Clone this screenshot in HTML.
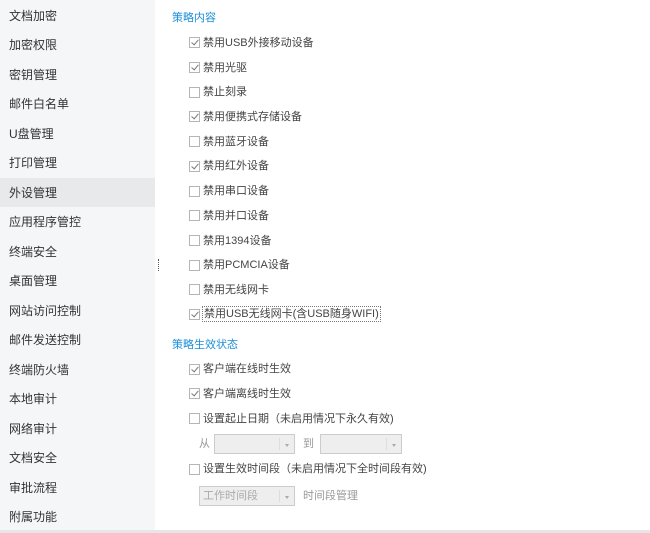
<!DOCTYPE html>
<html><head><meta charset="utf-8"><style>
*{margin:0;padding:0;box-sizing:border-box}
body{width:650px;height:533px;background:#fff;font-family:"Liberation Sans","Noto Sans CJK SC",sans-serif;position:relative;overflow:hidden;color:#444}
.side{position:absolute;left:0;top:0;width:155px;height:533px;background:#f5f6f8}
.si{position:absolute;left:9px;font-size:12px;color:#333;line-height:16px}
.act{position:absolute;left:0;top:178px;width:155px;height:29px;background:#e8e9eb}
.t{position:absolute;font-size:11px;line-height:14px;white-space:nowrap;color:#444}
.h{position:absolute;left:172px;font-size:11px;color:#1a8fd8;line-height:14px}
.cb{position:absolute;left:189px;width:11px;height:11px;border:1px solid #b5b5b5;background:#fff}
.cb.c::after{content:"";position:absolute;left:3px;top:0px;width:3px;height:6px;border:solid #777;border-width:0 1px 1px 0;transform:rotate(40deg)}
.sel{position:absolute;height:20px;border:1px solid #ccc;background:#eee}
.sel::after{content:"";position:absolute;right:0;top:3px;width:14px;height:12px;border-left:1px solid #ddd}
.sel::before{content:"";position:absolute;right:5px;top:9px;border:2px solid transparent;border-top:3px solid #aaa}
.g{color:#999}
</style></head><body>
<div class="side"><div class="act"></div></div>
<div style="position:absolute;left:158px;top:259px;width:1px;height:12px;border-left:1px dotted #555"></div>
<div style="position:absolute;left:0;top:530px;width:650px;height:3px;background:#e6e6e6"></div>
<div class="si" style="top:8px">文档加密</div>
<div class="si" style="top:37px">加密权限</div>
<div class="si" style="top:67px">密钥管理</div>
<div class="si" style="top:96px">邮件白名单</div>
<div class="si" style="top:126px">U盘管理</div>
<div class="si" style="top:155px">打印管理</div>
<div class="si" style="top:185px">外设管理</div>
<div class="si" style="top:214px">应用程序管控</div>
<div class="si" style="top:244px">终端安全</div>
<div class="si" style="top:273px">桌面管理</div>
<div class="si" style="top:303px">网站访问控制</div>
<div class="si" style="top:332px">邮件发送控制</div>
<div class="si" style="top:362px">终端防火墙</div>
<div class="si" style="top:391px">本地审计</div>
<div class="si" style="top:421px">网络审计</div>
<div class="si" style="top:450px">文档安全</div>
<div class="si" style="top:480px">审批流程</div>
<div class="si" style="top:509px">附属功能</div>

<div class="h" style="top:11px">策略内容</div>
<div class="cb c" style="top:37px"></div><div class="t" style="left:203px;top:36px">禁用USB外接移动设备</div>
<div class="cb c" style="top:62px"></div><div class="t" style="left:203px;top:61px">禁用光驱</div>
<div class="cb" style="top:87px"></div><div class="t" style="left:203px;top:85px">禁止刻录</div>
<div class="cb c" style="top:111px"></div><div class="t" style="left:203px;top:110px">禁用便携式存储设备</div>
<div class="cb" style="top:136px"></div><div class="t" style="left:203px;top:135px">禁用蓝牙设备</div>
<div class="cb c" style="top:161px"></div><div class="t" style="left:203px;top:159px">禁用红外设备</div>
<div class="cb" style="top:186px"></div><div class="t" style="left:203px;top:184px">禁用串口设备</div>
<div class="cb" style="top:210px"></div><div class="t" style="left:203px;top:209px">禁用并口设备</div>
<div class="cb" style="top:235px"></div><div class="t" style="left:203px;top:234px">禁用1394设备</div>
<div class="cb" style="top:260px"></div><div class="t" style="left:203px;top:258px">禁用PCMCIA设备</div>
<div class="cb" style="top:284px"></div><div class="t" style="left:203px;top:283px">禁用无线网卡</div>
<div class="cb c" style="top:309px"></div><div class="t" style="left:202px;top:306px;border:1px dotted #777;padding:0 1px">禁用USB无线网卡(含USB随身WIFI)</div>

<div class="h" style="top:338px">策略生效状态</div>
<div class="cb c" style="top:364px"></div><div class="t" style="left:203px;top:362px">客户端在线时生效</div>
<div class="cb c" style="top:388px"></div><div class="t" style="left:203px;top:387px">客户端离线时生效</div>
<div class="cb" style="top:413px"></div><div class="t" style="left:203px;top:412px">设置起止日期（未启用情况下永久有效)</div>
<div class="t g" style="left:199px;top:437px">从</div>
<div class="sel" style="left:214px;top:434px;width:81px"></div>
<div class="t g" style="left:303px;top:437px">到</div>
<div class="sel" style="left:320px;top:434px;width:82px"></div>
<div class="cb" style="top:464px"></div><div class="t" style="left:203px;top:462px">设置生效时间段（未启用情况下全时间段有效)</div>
<div class="sel" style="left:199px;top:486px;width:96px"><span class="t g" style="left:3px;top:2px;color:#aaa">工作时间段</span></div>
<div class="t g" style="left:303px;top:489px">时间段管理</div>
</body></html>
